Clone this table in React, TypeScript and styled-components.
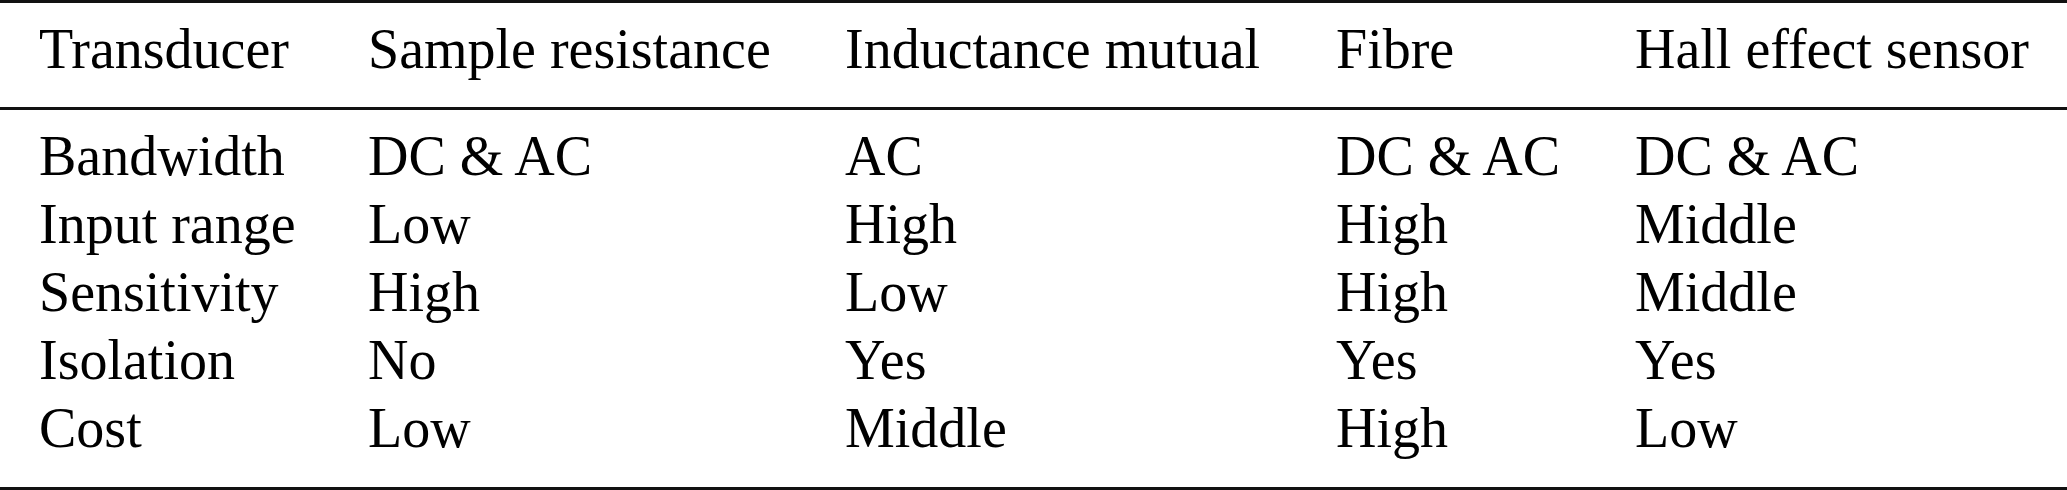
import React from 'react';
import styled, { createGlobalStyle } from 'styled-components';

const GlobalStyle = createGlobalStyle`
  html, body {
    margin: 0;
    padding: 0;
    background: #fff;
  }
`;

const Table = styled.div`
  width: 2067px;
  font-family: "Liberation Serif", "Times New Roman", serif;
  font-size: 56px;
  line-height: 68px;
  color: #000;
  border-top: 3px solid #111;
  border-bottom: 3px solid #111;
`;

const Section = styled.div<{ $head?: boolean }>`
  padding: ${(p) => (p.$head ? '12px 0 24px' : '12px 0 25px')};
  border-bottom: ${(p) => (p.$head ? '3px solid #111' : 'none')};
`;

const Row = styled.div`
  display: grid;
  grid-template-columns: 329px 477px 491px 299px 1fr;
  padding-left: 39px;
  white-space: nowrap;
`;

const Cell = styled.div``;

const header = ['Transducer', 'Sample resistance', 'Inductance mutual', 'Fibre', 'Hall effect sensor'];

const rows = [
  ['Bandwidth', 'DC & AC', 'AC', 'DC & AC', 'DC & AC'],
  ['Input range', 'Low', 'High', 'High', 'Middle'],
  ['Sensitivity', 'High', 'Low', 'High', 'Middle'],
  ['Isolation', 'No', 'Yes', 'Yes', 'Yes'],
  ['Cost', 'Low', 'Middle', 'High', 'Low'],
];

const App: React.FC = () => {
  return (
    <>
      <GlobalStyle />
      <Table>
        <Section $head>
          <Row>
            {header.map((h) => (
              <Cell key={h}>{h}</Cell>
            ))}
          </Row>
        </Section>
        <Section>
          {rows.map((r) => (
            <Row key={r[0]}>
              {r.map((c, i) => (
                <Cell key={i}>{c}</Cell>
              ))}
            </Row>
          ))}
        </Section>
      </Table>
    </>
  );
};

export default App;
